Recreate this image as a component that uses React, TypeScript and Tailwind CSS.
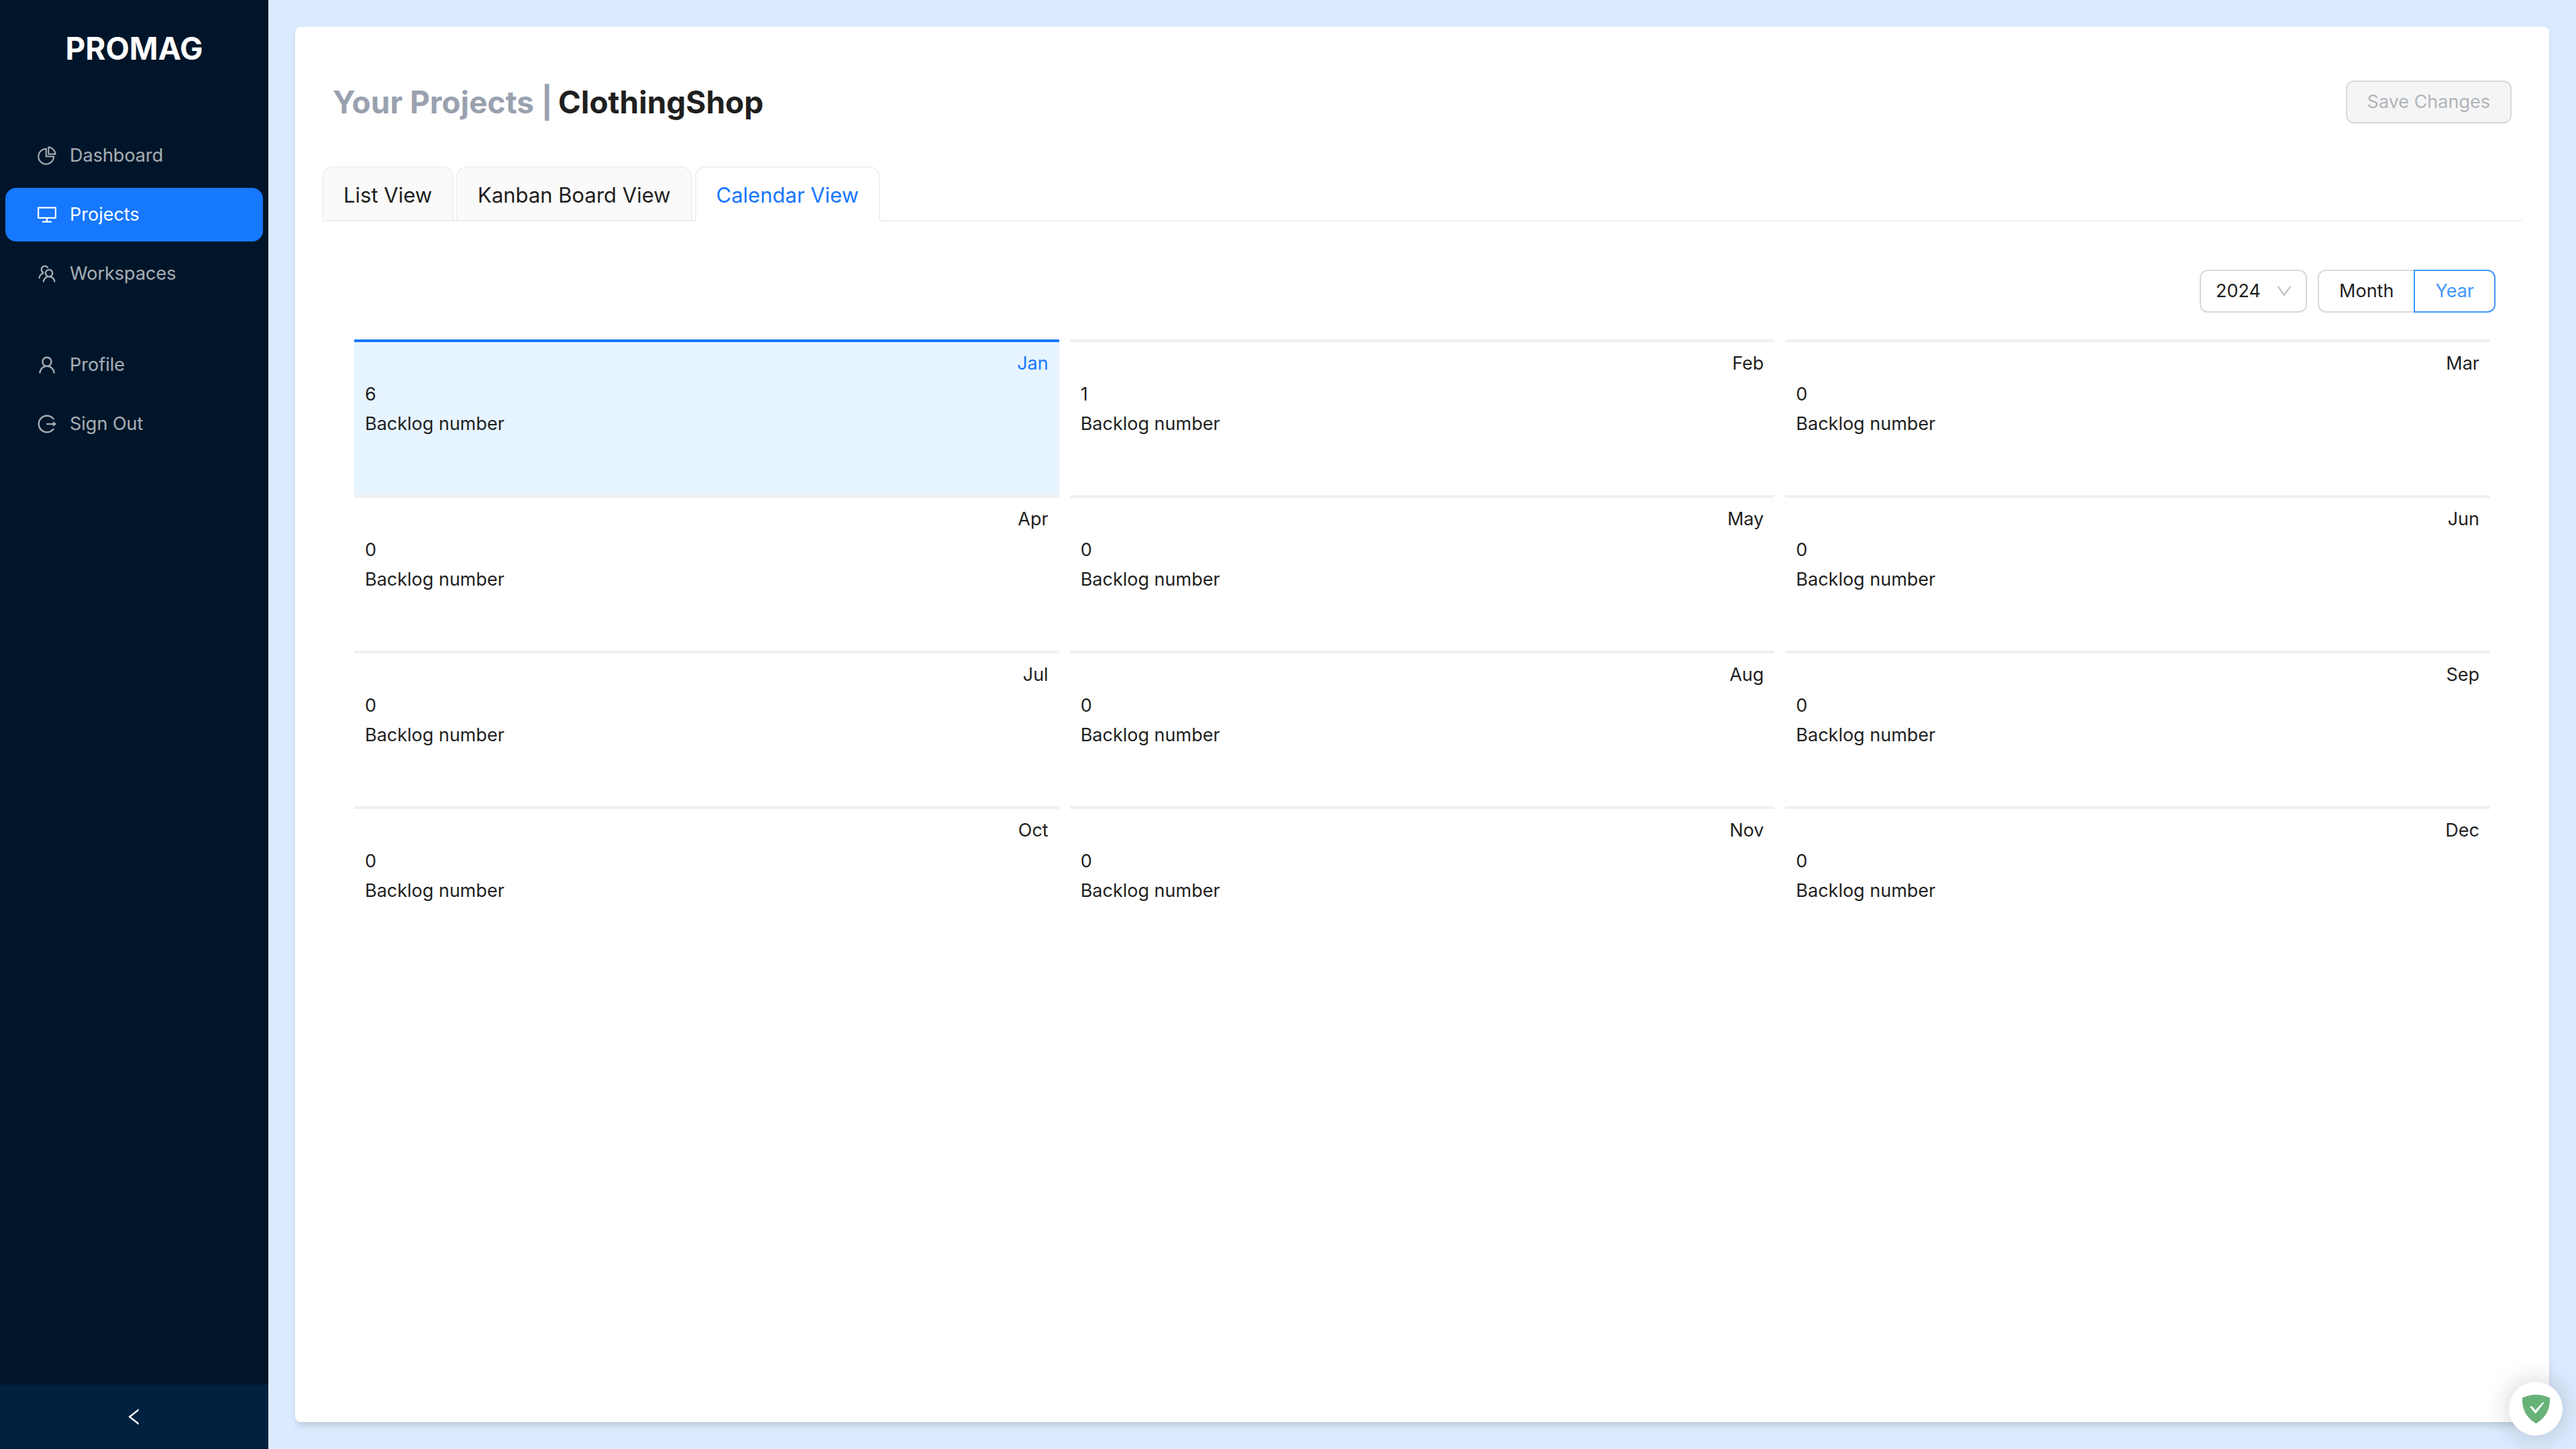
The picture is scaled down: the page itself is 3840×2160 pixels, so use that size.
import { useState, type ReactNode } from "react";
import {
  AiOutlineDesktop,
  AiOutlineDown,
  AiOutlineLeft,
  AiOutlineLogout,
  AiOutlinePieChart,
  AiOutlineTeam,
  AiOutlineUser,
} from "react-icons/ai";

const months = [
  [{ name: "Jan", count: 6 }, { name: "Feb", count: 1 }, { name: "Mar", count: 0 }],
  [{ name: "Apr", count: 0 }, { name: "May", count: 0 }, { name: "Jun", count: 0 }],
  [{ name: "Jul", count: 0 }, { name: "Aug", count: 0 }, { name: "Sep", count: 0 }],
  [{ name: "Oct", count: 0 }, { name: "Nov", count: 0 }, { name: "Dec", count: 0 }],
];

function NavItem({ icon, label, active }: { icon: ReactNode; label: string; active?: boolean }) {
  return (
    <li>
      <a
        href="#"
        aria-current={active ? "page" : undefined}
        className={`flex h-20 items-center gap-[18px] rounded-2xl px-[46px] ${
          active ? "bg-[#1677ff] text-white" : "text-white/65"
        }`}
      >
        {icon}
        <span>{label}</span>
      </a>
    </li>
  );
}

function Sidebar() {
  return (
    <aside className="flex w-[400px] shrink-0 flex-col bg-[#001529]">
      <div className="flex h-36 items-center justify-center text-[46px] font-bold text-white">PROMAG</div>
      <nav className="flex-1 px-2 pt-12">
        <ul className="flex flex-col gap-2">
          <NavItem icon={<AiOutlinePieChart className="size-8" />} label="Dashboard" />
          <NavItem icon={<AiOutlineDesktop className="size-8" />} label="Projects" active />
          <NavItem icon={<AiOutlineTeam className="size-8" />} label="Workspaces" />
        </ul>
        <ul className="mt-14 flex flex-col gap-2">
          <NavItem icon={<AiOutlineUser className="size-8" />} label="Profile" />
          <NavItem icon={<AiOutlineLogout className="size-8" />} label="Sign Out" />
        </ul>
      </nav>
      <button
        type="button"
        aria-label="Collapse sidebar"
        className="flex h-24 items-center justify-center bg-[#002140] text-white"
      >
        <AiOutlineLeft className="size-8" />
      </button>
    </aside>
  );
}

function Tabs() {
  const [current, setCurrent] = useState("Calendar View");
  return (
    <div role="tablist" className="flex gap-1 border-b-2 border-[#f0f0f0] text-[31px] leading-[50px]">
      {["List View", "Kanban Board View", "Calendar View"].map((tab) => (
        <button
          key={tab}
          type="button"
          role="tab"
          aria-selected={tab === current}
          onClick={() => setCurrent(tab)}
          className={`-mb-0.5 rounded-t-2xl border-2 border-[#f0f0f0] px-[30px] pt-4 pb-3 whitespace-nowrap ${
            tab === current ? "border-b-white bg-white text-[#1677ff]" : "bg-[#fafafa]"
          }`}
        >
          {tab}
        </button>
      ))}
    </div>
  );
}

function CalendarHeader() {
  const [mode, setMode] = useState("Year");
  return (
    <div className="flex justify-end gap-4">
      <div className="relative w-40">
        <select
          aria-label="Year"
          defaultValue="2024"
          className="h-16 w-full appearance-none rounded-xl border-2 border-[#d9d9d9] bg-white pr-12 pl-[22px]"
        >
          <option>2023</option>
          <option>2024</option>
          <option>2025</option>
        </select>
        <AiOutlineDown className="pointer-events-none absolute top-[18px] right-5 size-7 text-black/25" />
      </div>
      <div role="radiogroup" aria-label="Calendar mode" className="flex">
        {["Month", "Year"].map((option) => (
          <label
            key={option}
            className={`-ml-0.5 flex h-16 cursor-pointer items-center border-2 px-[30px] first:ml-0 first:rounded-l-xl last:rounded-r-xl ${
              option === mode ? "z-10 border-[#4096ff] text-[#4096ff]" : "border-[#d9d9d9]"
            }`}
          >
            <input
              type="radio"
              name="mode"
              checked={option === mode}
              onChange={() => setMode(option)}
              className="sr-only"
            />
            {option}
          </label>
        ))}
      </div>
    </div>
  );
}

function MonthTable() {
  return (
    <table className="mt-10 w-full table-fixed border-collapse">
      <tbody>
        {months.map((row) => (
          <tr key={row[0].name}>
            {row.map(({ name, count }) => {
              const selected = name === "Jan";
              return (
                <td key={name} className="px-2 py-0">
                  <div
                    className={`h-[232px] border-t-4 px-4 pt-2 ${
                      selected ? "border-[#1677ff] bg-[#e6f4ff]" : "border-[#f0f0f0]"
                    }`}
                  >
                    <div className={`text-right leading-[48px] ${selected ? "text-[#1677ff]" : ""}`}>{name}</div>
                    <div>{count}</div>
                    <div>Backlog number</div>
                  </div>
                </td>
              );
            })}
          </tr>
        ))}
      </tbody>
    </table>
  );
}

function ShieldBadge() {
  return (
    <button
      type="button"
      aria-label="Protection status"
      className="fixed right-5 bottom-5 flex size-20 items-center justify-center rounded-full bg-white shadow-[0_0_40px_rgba(0,0,0,0.2)]"
    >
      <svg viewBox="0 0 41 43" className="h-[43px] w-[41px]" aria-hidden="true">
        <path
          d="M20.5 0C14 0 6.500 1.500 0 4.800C0 12 -0.900 30 20.500 43C41.900 30 41 12 41 4.800C34.500 1.500 27 0 20.500 0Z"
          fill="#67b279"
        />
        <path
          d="M19.800 28.500L11 18C12.500 16.700 14.500 17.200 15.500 18.500L19.600 23.200L29 12.700C30.500 11.300 32 11.500 32.500 12Z"
          fill="#fff"
        />
      </svg>
    </button>
  );
}

export default function App() {
  return (
    <div className="flex min-h-screen bg-[#dbeafe] font-[Inter,sans-serif] text-[27px] leading-[44px] text-[#1f1f1f]">
      <Sidebar />
      <main className="flex min-w-0 flex-1 p-10">
        <section className="min-w-0 flex-1 rounded-lg bg-white px-10 pt-20 shadow-[0_8px_12px_-2px_rgba(0,0,0,0.1),0_4px_8px_-4px_rgba(0,0,0,0.1)]">
          <header className="flex items-center justify-between px-4">
            <h1 className="flex gap-2 text-[46px] leading-[64px] font-bold">
              <span className="text-gray-400">Your Projects |</span>
              <span>ClothingShop</span>
            </h1>
            <button
              type="button"
              disabled
              className="h-16 rounded-xl border-2 border-[#d9d9d9] bg-[#f5f5f5] px-[30px] text-[#b0b4ba]"
            >
              Save Changes
            </button>
          </header>
          <div className="mt-16">
            <Tabs />
          </div>
          <div className="px-10 pt-[72px]">
            <CalendarHeader />
            <MonthTable />
          </div>
        </section>
      </main>
      <ShieldBadge />
    </div>
  );
}
